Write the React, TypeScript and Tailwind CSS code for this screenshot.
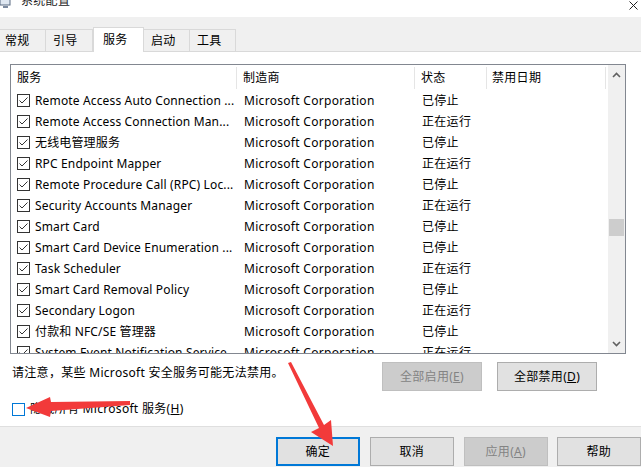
import React from "react";

const rows: { name: string; status: string }[] = [
  { name: "Remote Access Auto Connection ...", status: "已停止" },
  { name: "Remote Access Connection Man...", status: "正在运行" },
  { name: "无线电管理服务", status: "已停止" },
  { name: "RPC Endpoint Mapper", status: "正在运行" },
  { name: "Remote Procedure Call (RPC) Loc...", status: "已停止" },
  { name: "Security Accounts Manager", status: "正在运行" },
  { name: "Smart Card", status: "已停止" },
  { name: "Smart Card Device Enumeration ...", status: "已停止" },
  { name: "Task Scheduler", status: "正在运行" },
  { name: "Smart Card Removal Policy", status: "已停止" },
  { name: "Secondary Logon", status: "正在运行" },
  { name: "付款和 NFC/SE 管理器", status: "已停止" },
  { name: "System Event Notification Service", status: "正在运行" },
];

const tabs = ["常规", "引导", "服务", "启动", "工具"];

function CheckBox() {
  return (
    <svg width="13" height="13" viewBox="0 0 13 13" className="shrink-0">
      <rect x="0.5" y="0.5" width="12" height="12" fill="#fff" stroke="#333" />
      <polyline points="2.5,6.5 5,9 10.5,3.5" fill="none" stroke="#333" strokeWidth="1" />
    </svg>
  );
}

function Chevron({ up }: { up?: boolean }) {
  return (
    <svg width="9" height="6" viewBox="0 0 9 6">
      <polyline
        points={up ? "1,5 4.5,1.5 8,5" : "1,1 4.5,4.5 8,1"}
        fill="none"
        stroke="#606060"
        strokeWidth="1.6"
      />
    </svg>
  );
}

function Btn({ label, disabled, primary, className }: { label: React.ReactNode; disabled?: boolean; primary?: boolean; className: string }) {
  let look = "bg-[#e1e1e1] border border-[#adadad] text-black";
  if (disabled) look = "bg-[#cccccc] border border-[#bfbfbf] text-[#838383]";
  if (primary) look = "bg-[#e1e1e1] border-2 border-[#0078d7] text-black";
  return (
    <div className={`flex items-center justify-center text-[12px] ${look} ${className}`}>{label}</div>
  );
}

export default function App() {
  return (
    <div className="relative w-[641px] h-[467px] overflow-hidden bg-white font-['Noto_Sans','Noto_Sans_CJK_SC',sans-serif] tracking-[0.3px] text-black select-none">
      {/* Title bar */}
      <div className="h-[17px] flex items-start justify-between bg-white">
        <div className="flex items-start gap-[10px]">
          <svg width="11" height="8" viewBox="0 0 11 8">
            <rect x="0" y="-2" width="10" height="7" fill="#dfe7f1" stroke="#5a6b82" />
            <rect x="3" y="6" width="5" height="2" fill="#7c8aa0" />
          </svg>
          <span className="text-[12px] leading-[12px] -mt-[5px] text-[#222]">系统配置</span>
        </div>
        <svg width="9" height="9" viewBox="0 0 9 9" className="mr-[3px] mt-[1px]">
          <path d="M0.5 0.5 L8.5 8.5 M8.5 0.5 L0.5 8.5" stroke="#222" strokeWidth="1" />
        </svg>
      </div>

      {/* Tabs */}
      <div className="h-[35px] bg-[#f0f0f0] flex items-end border-b border-[#d9d9d9]">
        {tabs.map((t, i) => {
          const sel = t === "服务";
          const w = [46, 47, 51, 46, 46][i];
          return (
            <div
              key={t}
              style={{ width: w }}
              className={
                sel
                  ? "h-[25px] -mb-px bg-white border border-b-0 border-[#d9d9d9] flex items-center pl-[9px] text-[12px] z-10"
                  : "h-[22px] border-r border-t border-[#d9d9d9] flex items-center pl-[5px] text-[12px] first:border-l-0"
              }
            >
              <span className={sel || i === 0 ? "" : "pl-[2px]"}>{t}</span>
            </div>
          );
        })}
      </div>

      {/* Tab page */}
      <div className="h-[374px] bg-white flex flex-col">
        <div className="mt-[12px] ml-[10px] w-[616px] h-[290px] border border-[#828790] flex overflow-hidden">
          <div className="flex flex-col w-[597px] pt-[1px]">
            <div className="h-[24px] flex shrink-0 text-[12px]">
              <div className="w-[226px] flex items-center pl-[6px] border-r border-[#e5e5e5] my-[1px]">服务</div>
              <div className="w-[178px] flex items-center pl-[6px] border-r border-[#e5e5e5] my-[1px]">制造商</div>
              <div className="w-[72px] flex items-center pl-[6px] border-r border-[#e5e5e5] my-[1px]">状态</div>
              <div className="w-[119px] flex items-center pl-[5px] border-r border-[#e5e5e5] my-[1px]">禁用日期</div>
            </div>
            {rows.map((r) => (
              <div key={r.name} className="h-[21px] flex shrink-0 text-[12px] whitespace-nowrap">
                <div className="w-[226px] flex items-center pl-[6px] gap-[5px] overflow-hidden">
                  <CheckBox />
                  <span className="tracking-[0.15px]">{r.name}</span>
                </div>
                <div className="w-[178px] flex items-center pl-[7px]">Microsoft Corporation</div>
                <div className="w-[72px] flex items-center pl-[7px]">{r.status}</div>
                <div className="w-[119px]" />
              </div>
            ))}
          </div>
          {/* Scrollbar */}
          <div className="ml-auto w-[17px] h-full bg-[#f0f0f0] flex flex-col items-center">
            <div className="h-[17px] flex items-center justify-center mt-[1px]">
              <Chevron up />
            </div>
            <div className="mt-[136px] w-[15px] h-[17px] bg-[#cdcdcd]" />
            <div className="mt-auto h-[17px] flex items-center justify-center mb-[1px]">
              <Chevron />
            </div>
          </div>
        </div>

        <div className="flex items-start mt-[8px]">
          <div className="ml-[12px] text-[12px] mt-[2px]">请注意，某些 Microsoft 安全服务可能无法禁用。</div>
          <Btn className="ml-auto w-[100px] h-[29px]" disabled label={<span>全部启用(<u>E</u>)</span>} />
          <Btn className="ml-[15px] mr-[44px] w-[100px] h-[29px]" label={<span>全部禁用(<u>D</u>)</span>} />
        </div>

        <div className="flex items-center mt-[9px] ml-[12px] gap-[5px]">
          <div className="w-[13px] h-[13px] border border-[#0078d7] bg-white" />
          <span className="text-[12px]">隐藏所有 Microsoft 服务(<u>H</u>)</span>
        </div>
      </div>

      {/* Footer */}
      <div className="h-[41px] bg-[#f0f0f0] border-t border-[#dfdfdf] flex items-start pt-[10px] pl-[276px] gap-[10px]">
        <Btn className="w-[85px] h-[29px]" primary label="确定" />
        <Btn className="w-[86px] h-[29px]" label="取消" />
        <Btn className="w-[85px] h-[29px]" disabled label={<span>应用(<u>A</u>)</span>} />
        <Btn className="w-[86px] h-[29px] -ml-px" label="帮助" />
      </div>

      {/* Red annotation arrows */}
      <svg className="absolute left-0 top-0 pointer-events-none" width="641" height="467" viewBox="0 0 641 467">
        <polygon points="288,363 291,362 324,425 331,420 333,446 311,432 319,428" fill="#f23a3a" />
        <polygon points="130,401 130,405 51,411 50,417 26,408 50,397 51,402" fill="#f23a3a" />
      </svg>
    </div>
  );
}
